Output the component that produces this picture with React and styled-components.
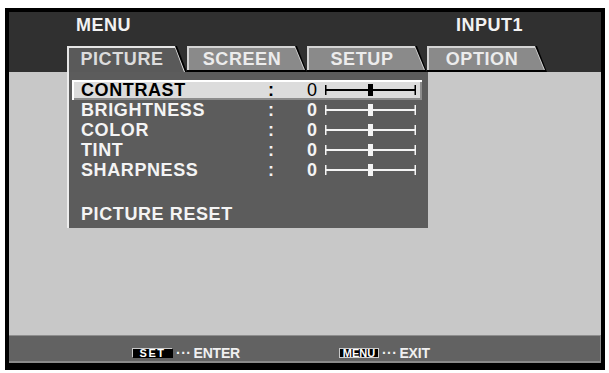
import React from 'react';
import styled, { createGlobalStyle } from 'styled-components';

const GlobalStyle = createGlobalStyle`
  body {
    margin: 0;
    background: #fff;
    font-family: "Liberation Sans", Arial, sans-serif;
  }
`;

const Frame = styled.div`
  margin: 8px 0 0 5px;
  width: 600px;
  height: 362px;
  box-sizing: border-box;
  border: 4px solid #000;
  border-bottom-width: 7px;
  display: flex;
  flex-direction: column;
  background: #c8c8c8;
  font-weight: bold;
`;

const Header = styled.div`
  height: 60px;
  box-sizing: border-box;
  padding-top: 3px;
  background: #303030;
  display: flex;
  flex-direction: column;
`;

const TitleRow = styled.div`
  display: flex;
  justify-content: space-between;
  padding: 0 78px 0 67px;
  font-size: 18px;
  line-height: 20px;
  letter-spacing: 0.5px;
  color: #f2f2f2;
`;

const TabRow = styled.div`
  display: flex;
  margin-top: 11px;
  padding-left: 58px;
  height: 26px;
`;

const slant = (px) => `polygon(0 0, calc(100% - ${px}px) 0, 100% 100%, 0 100%)`;

const Tab = styled.div`
  position: relative;
  width: 120px;
  height: 26px;
  background: #000;
  clip-path: ${slant(10)};

  &::before {
    content: '';
    position: absolute;
    top: 0;
    left: 0;
    right: 2px;
    bottom: ${(p) => (p.$active ? '0' : '2px')};
    background: ${(p) => (p.$active ? '#e6e6e6' : '#d4d4d4')};
    clip-path: ${slant(10)};
  }

  &::after {
    content: '';
    position: absolute;
    top: 2px;
    left: 2px;
    right: 3px;
    bottom: ${(p) => (p.$active ? '0' : '2px')};
    background: ${(p) => (p.$active ? '#5a5a5a' : '#8a8a8a')};
    clip-path: ${slant(9)};
  }
`;

const TabLabel = styled.span`
  position: relative;
  z-index: 1;
  display: block;
  padding: 2px 10px 0 0;
  text-align: center;
  font-size: 18px;
  line-height: 22px;
  letter-spacing: 0.6px;
  color: ${(p) => (p.$active ? '#dcdcdc' : '#ececec')};
`;

const Body = styled.div`
  flex: 1;
  padding-left: 58px;
`;

const Panel = styled.div`
  width: 361px;
  box-sizing: border-box;
  background: #5c5c5c;
  border-left: 2px solid #ededed;
  padding: 8px 0 4px 3px;
  font-size: 18px;
  letter-spacing: 0.6px;
`;

const Row = styled.div`
  width: 350px;
  height: 20px;
  box-sizing: border-box;
  padding-left: 9px;
  display: grid;
  grid-template-columns: 187px 39px 18px 92px;
  align-items: center;
  line-height: ${(p) => (p.$selected ? '17px' : '20px')};
  color: ${(p) => (p.$selected ? '#000' : '#f4f4f4')};
  background: ${(p) => (p.$selected ? '#dcdcdc' : 'transparent')};
  box-shadow: ${(p) =>
    p.$selected ? 'inset 2px 2px 0 #fff, inset -2px -2px 0 #8c8c8c' : 'none'};
  margin-top: ${(p) => p.$gap || 0}px;
`;

const Value = styled.span`
  font-weight: ${(p) => (p.$selected ? 'normal' : 'bold')};
  letter-spacing: 0;
`;

const SliderSvg = styled.svg`
  display: block;
`;

const Slider = ({ color }) => (
  <SliderSvg width="92" height="14" viewBox="0 0 92 14">
    <rect x="0" y="6" width="91" height="2" fill={color} />
    <rect x="0" y="2" width="1.5" height="10" fill={color} />
    <rect x="89.5" y="2" width="1.5" height="10" fill={color} />
    <rect x="43" y="1" width="5" height="12" fill={color} />
  </SliderSvg>
);

const Footer = styled.div`
  height: 28px;
  box-sizing: border-box;
  background: #626262;
  box-shadow: inset 0 1px 0 #8e8e8e, inset 0 -2px 0 #8a8a8a, inset -1px 0 0 #8a8a8a;
  display: flex;
  align-items: flex-start;
  padding: 10px 0 0 123px;
  gap: 99px;
`;

const Hint = styled.div`
  display: flex;
  align-items: center;
  height: 16px;
  color: #f0f0f0;
  font-size: 14px;
  letter-spacing: -0.2px;
`;

const Key = styled.span`
  display: inline-flex;
  align-items: center;
  justify-content: center;
  width: ${(p) => p.$w}px;
  height: 10px;
  box-sizing: border-box;
  background: #000;
  color: #fff;
  font-size: 11px;
  line-height: 10px;
  letter-spacing: ${(p) => (p.$outlined ? '0' : '1.5px')};
  border: 1px solid ${(p) => (p.$outlined ? '#d0d0d0' : 'transparent')};
  border-top-color: #c8c8c8;
  border-left-color: #c8c8c8;
`;

const Dots = styled.span`
  margin: 0 2px 0 3px;
  letter-spacing: 0.5px;
`;

const rows = ['BRIGHTNESS', 'COLOR', 'TINT', 'SHARPNESS'];

export default function App() {
  return (
    <>
      <GlobalStyle />
      <Frame>
        <Header>
          <TitleRow>
            <span>MENU</span>
            <span>INPUT1</span>
          </TitleRow>
          <TabRow>
            {['PICTURE', 'SCREEN', 'SETUP', 'OPTION'].map((t, i) => (
              <Tab key={t} $active={i === 0}>
                <TabLabel $active={i === 0}>{t}</TabLabel>
              </Tab>
            ))}
          </TabRow>
        </Header>
        <Body>
          <Panel>
            <Row $selected>
              <span>CONTRAST</span>
              <span>:</span>
              <Value $selected>0</Value>
              <Slider color="#000" />
            </Row>
            {rows.map((r) => (
              <Row key={r}>
                <span>{r}</span>
                <span>:</span>
                <Value>0</Value>
                <Slider color="#f4f4f4" />
              </Row>
            ))}
            <Row $gap={24}>
              <span>PICTURE RESET</span>
            </Row>
          </Panel>
        </Body>
        <Footer>
          <Hint>
            <Key $w={41}>SET</Key>
            <Dots>···</Dots>ENTER
          </Hint>
          <Hint>
            <Key $w={40} $outlined>MENU</Key>
            <Dots>···</Dots>EXIT
          </Hint>
        </Footer>
      </Frame>
    </>
  );
}
